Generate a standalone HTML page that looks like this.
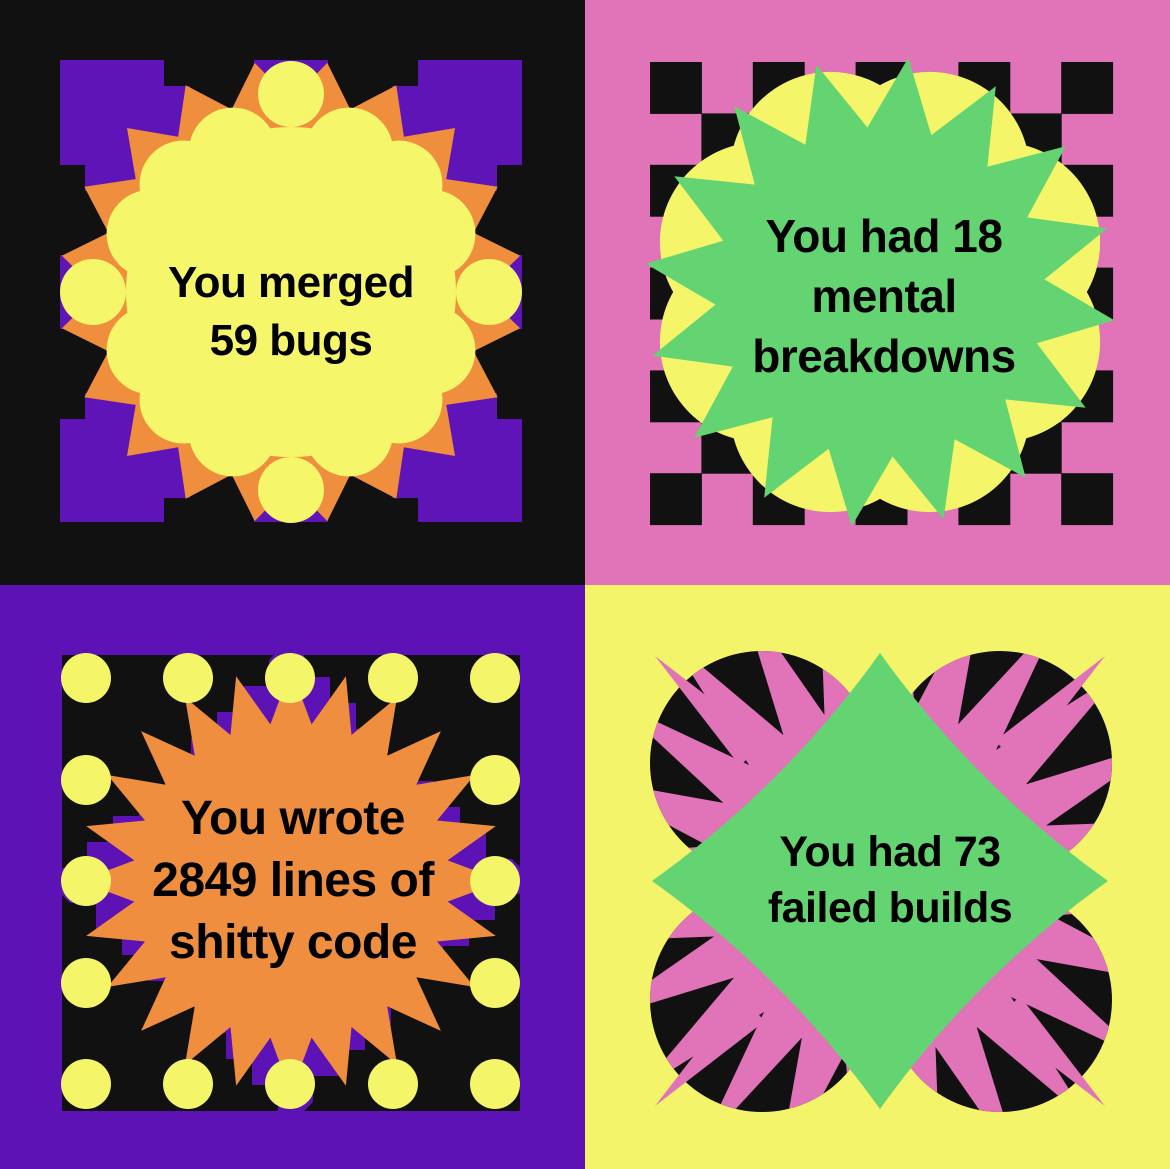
<!DOCTYPE html>
<html><head><meta charset="utf-8"><style>
html,body{margin:0;padding:0;background:#111}
svg{display:block}
text{font-family:"Liberation Sans",Arial,sans-serif;font-weight:bold;fill:#000;text-anchor:middle;letter-spacing:-0.5px}
</style></head><body>
<svg id="s" width="1170" height="1169" viewBox="0 0 1170 1169" xmlns="http://www.w3.org/2000/svg">
<rect x="0" y="0" width="585" height="585" fill="#121112"/>
<rect x="585" y="0" width="585" height="585" fill="#e173b9"/>
<rect x="0" y="585" width="585" height="584" fill="#5d12b6"/>
<rect x="585" y="585" width="585" height="584" fill="#f4f46a"/>
<g id="q1"></g><g id="q2"></g><g id="q3"></g><g id="q4"></g>
<g id="txt">
<text x="291" y="297" font-size="44">You merged</text>
<text x="291" y="355" font-size="44">59 bugs</text>
<text x="884" y="252" font-size="46">You had 18</text>
<text x="884" y="312" font-size="46">mental</text>
<text x="884" y="372" font-size="46">breakdowns</text>
<text x="293" y="834" font-size="48">You wrote</text>
<text x="293" y="896" font-size="48">2849 lines of</text>
<text x="293" y="958" font-size="48">shitty code</text>
<text x="890" y="866" font-size="43">You had 73</text>
<text x="890" y="922" font-size="43">failed builds</text>
</g>
</svg>
<script>
const NS="http://www.w3.org/2000/svg";
function el(p,t,a){const e=document.createElementNS(NS,t);for(const k in a)e.setAttribute(k,a[k]);p.appendChild(e);return e;}
function star(cx,cy,n,ro,ri,rot){let pts=[];for(let i=0;i<2*n;i++){const a=rot+Math.PI*i/n;const r=i%2?ri:ro;pts.push((cx+r*Math.sin(a)).toFixed(1)+","+(cy-r*Math.cos(a)).toFixed(1));}return pts.join(" ");}
function rotPts(pts,cx,cy,k){return pts.map(([x,y])=>{let dx=x-cx,dy=y-cy;for(let i=0;i<k;i++){[dx,dy]=[-dy,dx];}return [cx+dx,cy+dy];});}
// Q1
(function(){const g=document.getElementById('q1');const cx=291,cy=292;
el(g,'rect',{x:60,y:60,width:462,height:462,fill:'#5f14b8'});
let w=[];const s=26;let x0=138;w.push([138,60]);for(let k=0;k<6;k++){w.push([x0+s*k,60+s*k]);w.push([x0+s*(k+1),60+s*k]);}
w.push([x0+s*6,60+s*6]);w.push([254,60+s*6]);w.push([254,60]);
const mir=w.map(([x,y])=>[2*cx-x,y]);
for(let k=0;k<4;k++){[w,mir].forEach(p=>{el(g,'polygon',{points:rotPts(p,cx,cy,k).map(q=>q.join(',')).join(' '),fill:'#121112'});});}
el(g,'polygon',{points:star(cx,cy,20,232,192,Math.PI/20),fill:'#ef8e3c'});
el(g,'circle',{cx:cx,cy:cy,r:165,fill:'#f6f66a'});
for(let i=0;i<16;i++){const a=i*Math.PI/8;const big=i%4==0;const r=big?198:152,rr=big?33:44;el(g,'circle',{cx:cx+r*Math.sin(a),cy:cy-r*Math.cos(a),r:rr,fill:'#f6f66a'});}
})();
// Q2
(function(){const g=document.getElementById('q2');const cx=880,cy=292;
const c=51.4;for(let i=0;i<9;i++)for(let j=0;j<9;j++){if((i+j)%2==0)el(g,'rect',{x:650+i*c,y:62+j*c,width:c+0.5,height:c+0.5,fill:'#111'});}
el(g,'circle',{cx:cx,cy:cy,r:175,fill:'#f5f56a'});
for(let i=0;i<8;i++){const a=Math.PI/8+i*Math.PI/4;el(g,'circle',{cx:cx+130*Math.sin(a),cy:cy-130*Math.cos(a),r:100,fill:'#f5f56a'});}
el(g,'polygon',{points:star(cx,cy,16,236,165,0.12),fill:'#63d471'});
})();
// Q3
(function(){const g=document.getElementById('q3');const cx=291,cy=881;
el(g,'rect',{x:62,y:655,width:458,height:456,fill:'#111'});
let p=[];const s=26;const R=230;for(let k=0;k<=8;k++){p.push([cx+s*k-s/2, cy-R+s*k]);p.push([cx+s*(k+1)-s/2,cy-R+s*k]);}
let full=[];for(let q=0;q<4;q++)full=full.concat(rotPts(p,cx,cy,q));
el(g,'polygon',{points:full.map(q=>q.join(',')).join(' '),fill:'#5d12b6'});
el(g,'polygon',{points:star(cx,cy,24,212,158,0),fill:'#ee8e3e'});
const xs=[86,188,290,393,495],ys=[678,780,881,983,1084];
for(let i=0;i<5;i++)for(let j=0;j<5;j++){if(i==0||i==4||j==0||j==4){el(g,'circle',{cx:xs[i],cy:ys[j],r:25,fill:'#f5f56a'});}}
})();
// Q4
(function(){const g=document.getElementById('q4');const cx=880,cy=881;
const cs=[[762,763],[1000,763],[762,1000],[1000,1000]];
const cp=el(document.getElementById('s'),'clipPath',{id:'cc'});
cs.forEach(([x,y])=>el(cp,'circle',{cx:x,cy:y,r:112}));
cs.forEach(([x,y])=>el(g,'circle',{cx:x,cy:y,r:112,fill:'#111'}));
const pg=el(g,'g',{'clip-path':'url(#cc)'});
el(pg,'polygon',{points:star(cx,cy,24,320,175,0.07),fill:'#e173b9'});
[[-1,-1],[1,-1],[-1,1],[1,1]].forEach(([dx,dy])=>{el(g,'polygon',{points:`${cx+dx*140},${cy+dy*115} ${cx+dx*225},${cy+dy*225} ${cx+dx*115},${cy+dy*140}`,fill:'#e173b9'});});
el(g,'path',{d:`M${cx},${cy-228} Q${cx+95},${cy-95} ${cx+228},${cy} Q${cx+95},${cy+95} ${cx},${cy+228} Q${cx-95},${cy+95} ${cx-228},${cy} Q${cx-95},${cy-95} ${cx},${cy-228}Z`,fill:'#63d471'});
})();
</script>
</body></html>
